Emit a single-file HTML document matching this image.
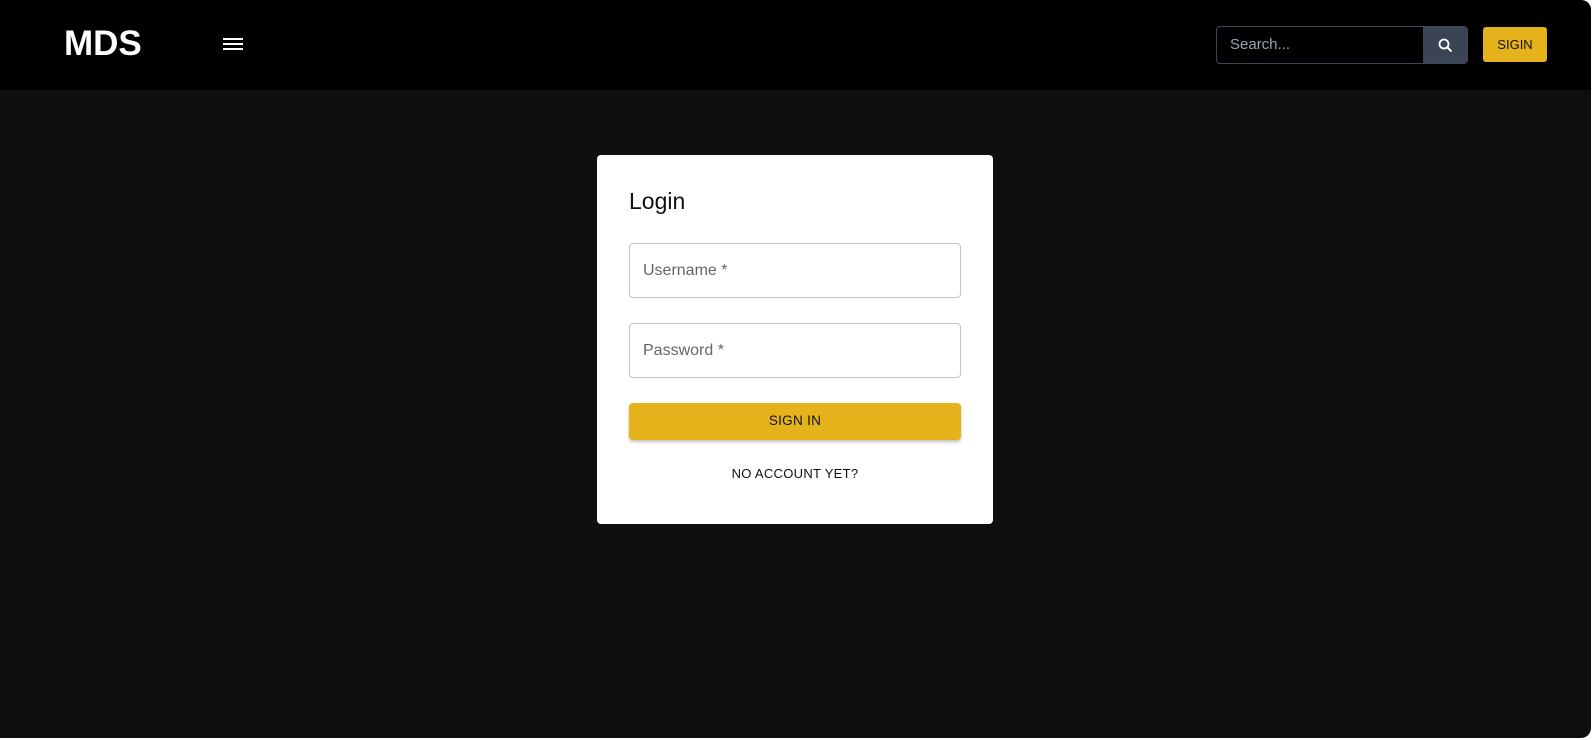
<!DOCTYPE html>
<html><head><style>
html,body{margin:0;padding:0;background:#fff;width:1594px;height:740px;overflow:hidden;font-family:"Liberation Sans",sans-serif}
.app{position:absolute;left:0;top:0;width:1591px;height:738px;background:#0f0f0f;border-radius:0 10px 10px 0;overflow:hidden}
.hdr{position:absolute;left:0;top:0;width:100%;height:90px;background:#000}
.logo{position:absolute;left:64px;top:24px;color:#fff;font-weight:bold;font-size:35px}
.ham{position:absolute;left:223px;top:38px;width:20px}
.ham i{display:block;height:2px;background:#fff;margin-bottom:3px}
.search{position:absolute;left:1216px;top:26px;width:250px;height:36px;border:1px solid #3e4758;border-radius:4px;overflow:hidden}
.search span{position:absolute;left:13px;top:9px;color:#9aa3b2;font-size:15px}
.sbtn{position:absolute;right:0;top:0;width:44px;height:36px;background:#3b4455}
.sigin{position:absolute;left:1483px;top:27px;width:64px;height:35px;background:#e4b31c;border-radius:3px;font-size:13px;text-align:center;line-height:35px;color:#111}
.card{position:absolute;left:597px;top:155px;width:396px;height:369px;background:#fff;border-radius:4px}
.card h1{position:absolute;left:32px;top:33px;margin:0;font-weight:normal;font-size:23px;color:#111}
.inp{position:absolute;left:32px;width:330px;height:53px;border:1px solid #c4c4c4;border-radius:4px}
.inp span{position:absolute;left:13px;top:18px;color:#666;font-size:16px}
.btn{position:absolute;left:32px;top:248px;width:332px;height:37px;background:#e4b31c;border-radius:4px;box-shadow:0 2px 3px rgba(0,0,0,.25);text-align:center;line-height:36px;font-size:13.5px;color:#111;letter-spacing:.3px}
.na{position:absolute;left:0;width:100%;top:311px;text-align:center;font-size:13px;color:#111;letter-spacing:.3px}
</style></head><body>
<div class="app">
<div class="hdr">
<div class="logo">MDS</div>
<div class="ham"><i></i><i></i><i></i></div>
<div class="search"><span>Search...</span><div class="sbtn"><svg width="44" height="36" viewBox="0 0 44 36"><circle cx="21" cy="17" r="4.5" fill="none" stroke="#fff" stroke-width="1.8"/><path d="M24.2 20.2l4.3 4.3" stroke="#fff" stroke-width="2"/></svg></div></div>
<div class="sigin">SIGIN</div>
</div>
<div class="card">
<h1>Login</h1>
<div class="inp" style="top:88px"><span>Username *</span></div>
<div class="inp" style="top:168px"><span>Password *</span></div>
<div class="btn">SIGN IN</div>
<div class="na">NO ACCOUNT YET?</div>
</div>
</div>
</body></html>
